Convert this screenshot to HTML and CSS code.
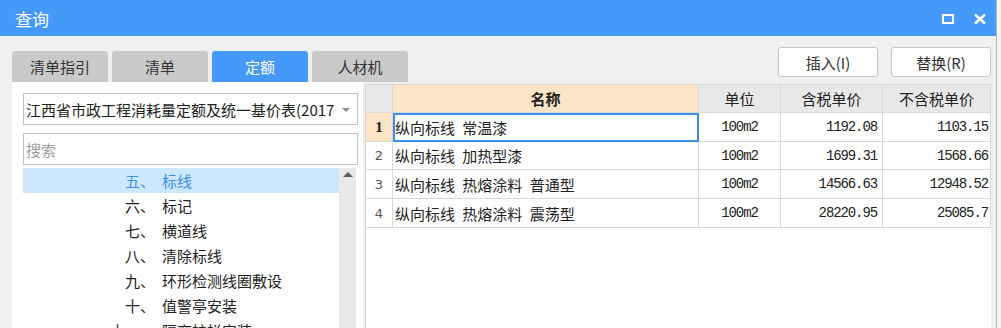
FILE: index.html
```html
<!DOCTYPE html>
<html>
  <head>
    <meta charset="utf-8">
    <title>查询</title>
    <link rel="stylesheet" href="styles.css">
  </head>
  <body>
    <div class="window">
      <div class="titleBar">
        <span class="title">查询</span>
        <div class="winButtons">
          <svg width="12" height="10" viewBox="0 0 12 10"><rect x="1" y="1" width="10" height="8" fill="none" stroke="#fff" stroke-width="2"/></svg>
          <svg width="14" height="10" viewBox="0 0 14 10"><path d="M2 0.5 L12 9.5 M12 0.5 L2 9.5" stroke="#fff" stroke-width="2.6"/></svg>
        </div>
      </div>

      <div class="main">
        <div class="leftPane">
          <div class="tabs">
            <div class="tab">清单指引</div>
            <div class="tab">清单</div>
            <div class="tab active">定额</div>
            <div class="tab">人材机</div>
          </div>
          <div class="panel">
            <div class="select">
              <span class="selectText">江西省市政工程消耗量定额及统一基价表(2017)</span>
              <span class="caret"></span>
            </div>
            <div class="search">搜索</div>
            <div class="tree">
              <div class="treeList">
                <div class="treeRow selected"><span class="num">五、</span><span>标线</span></div>
                <div class="treeRow"><span class="num">六、</span><span>标记</span></div>
                <div class="treeRow"><span class="num">七、</span><span>横道线</span></div>
                <div class="treeRow"><span class="num">八、</span><span>清除标线</span></div>
                <div class="treeRow"><span class="num">九、</span><span>环形检测线圈敷设</span></div>
                <div class="treeRow"><span class="num">十、</span><span>值警亭安装</span></div>
                <div class="treeRow"><span class="num">十一、</span><span>隔离护栏安装</span></div>
              </div>
              <div class="scrollBar"><span class="upArrow"></span></div>
            </div>
          </div>
        </div>

        <div class="rightPane">
          <div class="actions">
            <button class="btn">插入(I)</button>
            <button class="btn">替换(R)</button>
          </div>
          <div class="grid">
            <table>
              <tr class="head">
                <th class="rowNo"></th>
                <th class="nameHead">名称</th>
                <th>单位</th>
                <th>含税单价</th>
                <th>不含税单价</th>
              </tr>
              <tr class="r1">
                <td class="rowNo current">1</td>
                <td class="name focus">纵向标线 常温漆</td>
                <td class="unit">100m2</td>
                <td class="price">1192.08</td>
                <td class="price last">1103.15</td>
              </tr>
              <tr class="r2">
                <td class="rowNo">2</td>
                <td class="name">纵向标线 加热型漆</td>
                <td class="unit">100m2</td>
                <td class="price">1699.31</td>
                <td class="price last">1568.66</td>
              </tr>
              <tr class="r3">
                <td class="rowNo">3</td>
                <td class="name">纵向标线 热熔涂料 普通型</td>
                <td class="unit">100m2</td>
                <td class="price">14566.63</td>
                <td class="price last">12948.52</td>
              </tr>
              <tr class="r4">
                <td class="rowNo">4</td>
                <td class="name">纵向标线 热熔涂料 震荡型</td>
                <td class="unit">100m2</td>
                <td class="price">28220.95</td>
                <td class="price last">25085.7</td>
              </tr>
            </table>
          </div>
        </div>
      </div>
    </div>
    <div class="outside"></div>
  </body>
</html>
```

FILE: styles.css
```css
body {
  margin: 0;
  width: 1001px;
  height: 328px;
  overflow: hidden;
  display: flex;
  font-family: "Noto Sans CJK SC", "Noto Sans", sans-serif;
  font-size: 15px;
  color: #222;
}

.window {
  width: 996px;
  height: 328px;
  flex-shrink: 0;
  display: flex;
  flex-direction: column;
  background-color: #f0f0f0;
  overflow: hidden;
}

.outside {
  width: 4px;
  border-left: 1px solid #b8b8b8;
  background-color: #f4f4f4;
}

/* title bar */
.titleBar {
  height: 36px;
  flex-shrink: 0;
  display: flex;
  align-items: center;
  justify-content: space-between;
  padding: 0 9px 0 15px;
  background-color: #4499f9;
  color: #fff;
}

.title {
  font-size: 17px;
  margin-top: 1px;
}

.winButtons {
  display: flex;
  gap: 19px;
  margin-top: 1px;
}

/* body */
.main {
  flex: 1;
  display: flex;
  padding-left: 12px;
  min-height: 0;
}

.leftPane {
  width: 351px;
  flex-shrink: 0;
  display: flex;
  flex-direction: column;
  padding-top: 15px;
  min-height: 0;
}

.tabs {
  display: flex;
  gap: 4px;
  height: 31px;
  flex-shrink: 0;
}

.tab {
  width: 96px;
  flex-shrink: 0;
  display: flex;
  align-items: center;
  justify-content: center;
  border-radius: 3px 3px 0 0;
  background-color: #c9c9c9;
  color: #333;
}

.tab.active {
  background-color: #4499f9;
  color: #fff;
}

.panel {
  flex: 1;
  min-height: 0;
  overflow: hidden;
  background-color: #fff;
  padding: 11px 7px 0 11px;
}

.select,
.search {
  height: 30px;
  border: 1px solid #c2c2c2;
  display: flex;
  align-items: center;
  padding-left: 2px;
}

.select {
  width: 331px;
  position: relative;
  overflow: hidden;
}

.selectText {
  white-space: nowrap;
  overflow: hidden;
  width: 308px;
}

.caret {
  position: absolute;
  right: 7px;
  top: 14px;
  border-left: 4px solid transparent;
  border-right: 4px solid transparent;
  border-top: 4px solid #8a8a8a;
}

.search {
  width: 331px;
  margin-top: 8px;
  color: #a0a0a0;
}

.tree {
  display: flex;
  margin-top: 3px;
  height: 200px;
}

.treeList {
  width: 316px;
}

.treeRow {
  height: 25px;
  display: flex;
  align-items: center;
  gap: 7px;
}

.treeRow .num {
  width: 132px;
  text-align: right;
}

.treeRow.selected {
  background-color: #cce8ff;
  color: #3d8ee8;
}

.scrollBar {
  width: 17px;
  background-color: #e8e8e8;
  display: flex;
  justify-content: center;
}

.upArrow {
  margin-top: 4px;
  width: 0;
  height: 0;
  border-left: 5px solid transparent;
  border-right: 5px solid transparent;
  border-bottom: 5px solid #606060;
}

/* right side */
.rightPane {
  flex: 1;
  display: flex;
  flex-direction: column;
  padding-left: 2px;
  padding-right: 10px;
  min-height: 0;
}

.actions {
  display: flex;
  justify-content: flex-end;
  gap: 13px;
  padding-top: 11px;
  height: 30px;
  margin-bottom: 7px;
  flex-shrink: 0;
}

.btn {
  width: 100px;
  height: 30px;
  border: 1px solid #c6c6c6;
  border-radius: 3px;
  background-color: #fff;
  font-family: "Noto Sans CJK SC", sans-serif;
  font-size: 15px;
  color: #333;
  padding: 0;
}

.grid {
  flex: 1;
  background-color: #fff;
  border-left: 1px solid #d4d4d4;
  overflow: hidden;
}

table {
  border-collapse: collapse;
  table-layout: fixed;
  width: 621px;
  margin-left: -1px;
}

th,
td {
  border: 1px solid #d8d8d8;
  padding: 0;
  white-space: nowrap;
  overflow: hidden;
}

th {
  height: 27px;
  font-weight: normal;
  background-color: #e8e8e8;
  color: #222;
}

th.nameHead {
  background-color: #fce4c6;
  font-weight: bold;
}

td {
  height: 28px;
}

.r2 td {
  height: 27px;
}

.rowNo {
  width: 26px;
  text-align: center;
  background-color: #fff;
  color: #555;
  font-family: "DejaVu Sans", sans-serif;
  font-size: 13px;
}

th.rowNo {
  background-color: #e8e8e8;
}

td.rowNo.current {
  background-color: #fce4c6;
  color: #222;
  font-family: "Liberation Serif", serif;
  font-weight: bold;
  font-size: 15px;
}

.head th:nth-child(2) { width: 305px; }
.head th:nth-child(3) { width: 81px; }
.head th:nth-child(4) { width: 101px; }
.head th:nth-child(5) { width: 107px; }

.name {
  padding-left: 2px;
  word-spacing: 4px;
}

.name.focus {
  outline: 2px solid #3d8ee8;
  outline-offset: -2px;
}

.unit,
.price {
  font-family: "Liberation Mono", monospace;
  font-size: 14px;
  letter-spacing: -1.1px;
}

.unit {
  text-align: center;
}

.price {
  text-align: right;
  padding-right: 5px;
}

.price.last {
  padding-right: 2px;
}
```
